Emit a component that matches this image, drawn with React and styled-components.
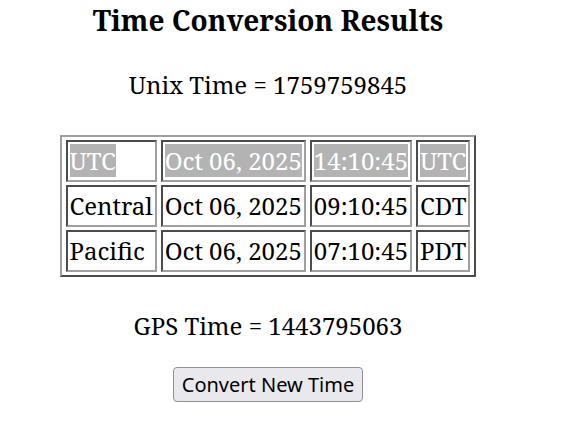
import React from 'react'
import styled, { createGlobalStyle } from 'styled-components'

const GlobalStyle = createGlobalStyle`
  body {
    margin: 0;
    background: #ffffff;
    color: #000000;
    font-family: "Noto Serif", "DejaVu Serif", serif;
  }
`;

const rows = [
  { zone: 'UTC', date: 'Oct 06, 2025', time: '14:10:45', abbr: 'UTC', hi: true },
  { zone: 'Central', date: 'Oct 06, 2025', time: '09:10:45', abbr: 'CDT' },
  { zone: 'Pacific', date: 'Oct 06, 2025', time: '07:10:45', abbr: 'PDT' },
];

// component
const App = () => (
  <Page>
    <GlobalStyle />
    <Title>Time Conversion Results</Title>
    <Line>Unix Time = 1759759845</Line>
    <Table>
      <tbody>
        {rows.map((r) => (
          <tr key={r.zone}>
            {[r.zone, r.date, r.time, r.abbr].map((v, i) => (
              <Cell key={i}>{r.hi ? <Mark>{v}</Mark> : v}</Cell>
            ))}
          </tr>
        ))}
      </tbody>
    </Table>
    <Line $gap={25}>GPS Time = 1443795063</Line>
    <Button>Convert New Time</Button>
  </Page>
);

// view(CSS in JS)
const Page = styled.div`
  width: 536px;
  display: flex;
  flex-direction: column;
  align-items: center;
  padding-top: 1px;
`;

const Title = styled.h2`
  font-size: 28px;
  font-weight: bold;
  margin: 0 0 29px;
`;

const Line = styled.p`
  font-size: 24px;
  margin: 0 0 ${(p) => p.$gap || 34}px;
`;

const Table = styled.table`
  border: 2px outset #a0a0a0;
  border-spacing: 4px 3px;
  margin-bottom: 32px;
`;

const Cell = styled.td`
  border: 2px inset #a0a0a0;
  padding: 2px 2px 3px;
  font-size: 24px;
`;

const Mark = styled.span`
  background: #b3b3b3;
  color: #ffffff;
`;

const Button = styled.button`
  font-family: "Noto Sans", "Open Sans", sans-serif;
  font-size: 20px;
  color: #000000;
  background: #e9e9ed;
  border: 1px solid #8f8f9d;
  border-radius: 4px;
  padding: 3px 8px;
`;

// export
export default App
